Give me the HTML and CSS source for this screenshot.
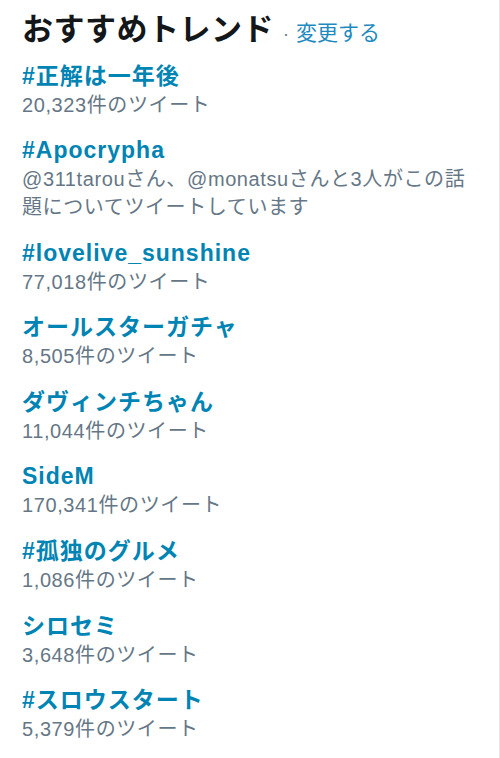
FILE: index.html
```html
<!DOCTYPE html>
<html lang="ja">
<head>
<meta charset="utf-8">
<title>おすすめトレンド</title>
<link rel="stylesheet" href="styles.css">
</head>
<body>
<div class="trends">
  <div class="header">
    <h3 class="title">おすすめトレンド</h3>
    <span class="dot">·</span>
    <a class="change" href="#">変更する</a>
  </div>
  <ul class="list">
    <li class="trend"><a class="name" href="#">#正解は一年後</a><div class="meta">20,323件のツイート</div></li>
    <li class="trend"><a class="name" href="#">#Apocrypha</a><div class="meta">@311tarouさん、@monatsuさんと3人がこの話題についてツイートしています</div></li>
    <li class="trend"><a class="name" href="#">#lovelive_sunshine</a><div class="meta">77,018件のツイート</div></li>
    <li class="trend"><a class="name" href="#">オールスターガチャ</a><div class="meta">8,505件のツイート</div></li>
    <li class="trend"><a class="name" href="#">ダヴィンチちゃん</a><div class="meta">11,044件のツイート</div></li>
    <li class="trend"><a class="name" href="#">SideM</a><div class="meta">170,341件のツイート</div></li>
    <li class="trend"><a class="name" href="#">#孤独のグルメ</a><div class="meta">1,086件のツイート</div></li>
    <li class="trend"><a class="name" href="#">シロセミ</a><div class="meta">3,648件のツイート</div></li>
    <li class="trend"><a class="name" href="#">#スロウスタート</a><div class="meta">5,379件のツイート</div></li>
  </ul>
</div>
</body>
</html>
```

FILE: styles.css
```css
html, body {
  margin: 0;
  padding: 0;
  background: #ffffff;
}

.trends {
  box-sizing: border-box;
  width: 500px;
  min-height: 758px;
  padding: 12px 20px 0 22px;
  border-right: 1px solid #e1e8ed;
  font-family: "Liberation Sans", "Noto Sans CJK JP", sans-serif;
}

.header {
  display: flex;
  align-items: baseline;
}

.title {
  margin: 0;
  font-size: 31px;
  line-height: 36px;
  font-weight: 700;
  letter-spacing: 0.5px;
  color: #14171a;
}

.dot {
  margin-left: 9px;
  font-size: 18px;
  color: #657786;
}

.change {
  margin-left: 7px;
  font-size: 21px;
  color: #1f8ac0;
  text-decoration: none;
}

.list {
  list-style: none;
  margin: 13.5px 0 0;
  padding: 0;
  display: flex;
  flex-direction: column;
  gap: 17.6px;
}

.trend {
  display: flex;
  flex-direction: column;
}

.name {
  font-size: 23px;
  line-height: 29px;
  font-weight: 700;
  letter-spacing: 1px;
  color: #0084b4;
  text-decoration: none;
}

.meta {
  font-size: 20px;
  line-height: 28px;
  letter-spacing: 0.6px;
  color: #657786;
}
```
